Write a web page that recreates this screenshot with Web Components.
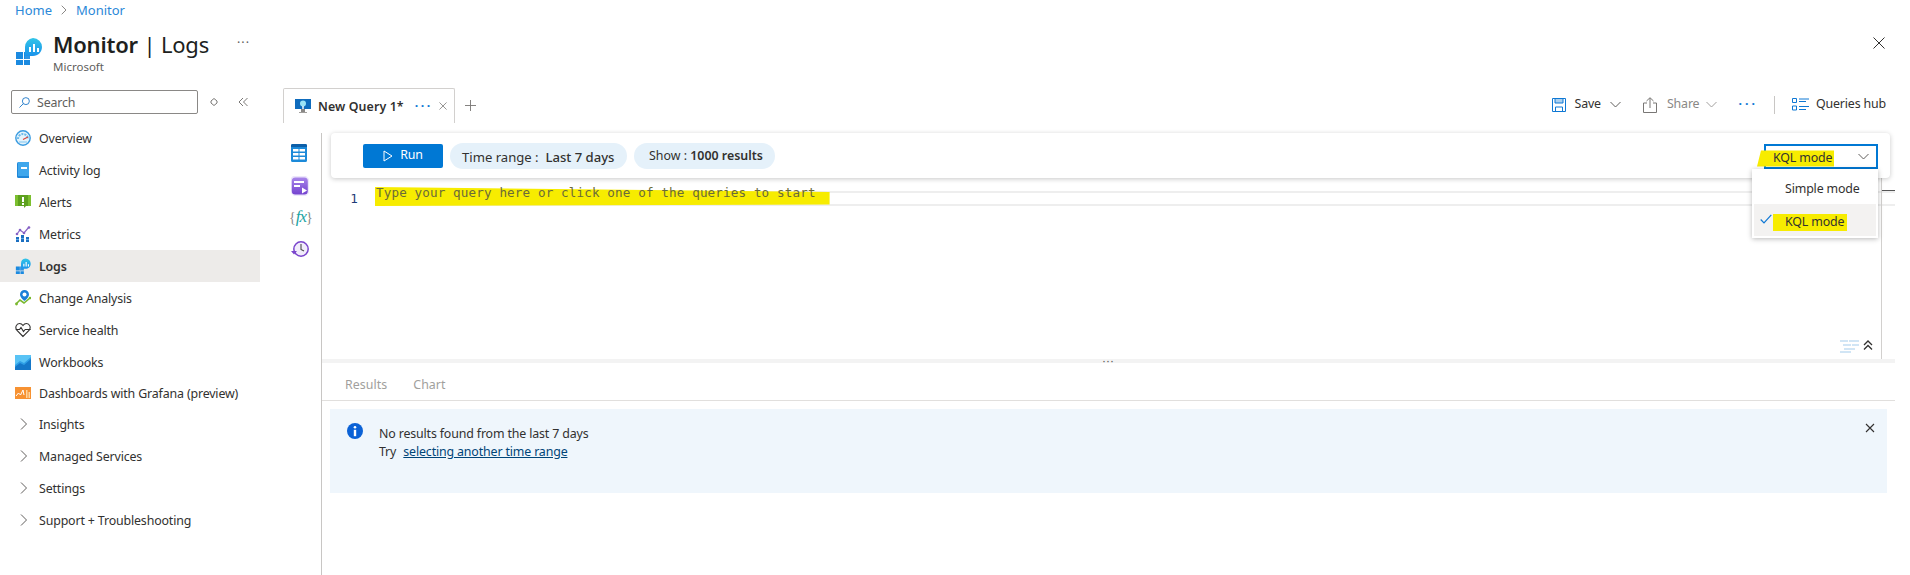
<!DOCTYPE html>
<html lang="en">
<head>
<meta charset="utf-8">
<title>Monitor | Logs</title>
<style>
  html, body { margin: 0; height: 100%; background: #fff; overflow: hidden; }
  body { font: 12.4px/1.3 "Noto Sans", "Liberation Sans", sans-serif; letter-spacing: -.15px; color: #323130; }
</style>
</head>
<body>
<monitor-app></monitor-app>

<script>
const icons = {
  monitor: `<svg viewBox="0 0 27 28"><defs><linearGradient id="g" x1="0" y1="0" x2="0" y2="1"><stop offset="0" stop-color="#32c5e8"/><stop offset="1" stop-color="#1b93eb"/></linearGradient></defs>
    <path fill="#1b8ae0" d="M1 15h7v7H1zM9 15h1v7H9zM1 23h7v5H1zM9 23h6v5H9z"/><path fill="#1b8ae0" d="M9 15h6v7H9z" opacity=".9"/>
    <path fill="url(#g)" d="M18 1a9 9 0 0 1 9 9c0 5-4 9-9 9h-8v-9a9 9 0 0 1 8-9z"/>
    <path fill="#fff" d="M14 10h2v5h-2zM18 7h2v8h-2zM22 11h2v4h-2z"/></svg>`,
  overview: `<svg viewBox="0 0 16 16"><circle cx="8" cy="8" r="7.2" fill="#e4f3fb" stroke="#3a9be0" stroke-width="1.4"/><path d="M3 9a5 5 0 0 1 10 0" fill="none" stroke="#6bb9ea" stroke-width="2" stroke-dasharray="2 1"/><path d="M8 9.5l5-2.5" stroke="#d9403a" stroke-width="1.2"/><path d="M4 12h8" stroke="#9dd2f2" stroke-width="1.4"/></svg>`,
  activity: `<svg viewBox="0 0 16 16"><path fill="#1f87d8" d="M2 1.5A1.5 1.5 0 0 1 3.5 0H14v16H3.5A1.5 1.5 0 0 1 2 14.5z"/><path fill="#3fa7ec" d="M3 0h11v14H3z"/><path fill="#fff" d="M6 5h6v2H6z"/></svg>`,
  alerts: `<svg viewBox="0 0 16 16"><path fill="#5ea11f" d="M0 1h16v11H11l-2 2v-2H0z"/><path fill="#7cbf2f" d="M0 1h3v11H0zM13 1h3v11h-3z"/><path fill="#fff" d="M7 3h2v5H7zM7 9h2v2H7z"/></svg>`,
  metrics: `<svg viewBox="0 0 16 16"><path fill="#1b6fc0" d="M1 11h3v5H1zM6 9h3v7H6zM11 11h3v5h-3z"/><path fill="#5ea8e8" d="M1 13h3v1H1zM6 12h3v1H6zM11 13h3v1h-3z"/><path fill="none" stroke="#8661c5" stroke-width="1.2" d="M2 8l3-4 4 3 5-6"/><g fill="#8661c5"><circle cx="2" cy="8" r="1.3"/><circle cx="5" cy="4" r="1.3"/><circle cx="9" cy="7" r="1.3"/><circle cx="14" cy="1.5" r="1.3"/></g></svg>`,
  change: `<svg viewBox="0 0 16 16"><path fill="none" stroke="#7ab82f" stroke-width="1.6" d="M1 14l4-4 4 3 6-5"/><circle cx="1.5" cy="14" r="1.4" fill="#7ab82f"/><circle cx="15" cy="8" r="1.3" fill="#7ab82f"/><path fill="#1b7fd8" d="M9.5 0a4.5 4.5 0 0 1 4.5 4.5c0 3-4.500 6.500-4.500 6.500S5 7.500 5 4.500A4.500 4.500 0 0 1 9.500 0z"/><circle cx="9.500" cy="4.500" r="2" fill="#fff"/></svg>`,
  health: `<svg viewBox="0 0 16 16"><path fill="none" stroke="#323130" stroke-width="1.1" d="M8 14.500L2 8.500C-.5 5.500 1.500 1.500 4.500 1.500c1.500 0 2.700.8 3.500 2 .8-1.200 2-2 3.500-2 3 0 5 4 2.500 7z"/><path fill="none" stroke="#323130" stroke-width="1.1" d="M.8 7.500h3.700l1.500-2 2.500 4 1.700-2h5.500"/></svg>`,
  workbooks: `<svg viewBox="0 0 16 16"><path fill="#2f9fe6" d="M0 1h16v15H0z"/><path fill="#59c3f5" d="M0 1h16v2L9 9 5 7l-5 4z"/><path fill="#1577c8" d="M0 16v-3l5-4 4 2 7-6v11z"/></svg>`,
  grafana: `<svg viewBox="0 0 16 12"><path fill="#f79232" d="M0 0h16v12H0z"/><path fill="#fcd5a0" d="M11 3h1.500v8H11zM13.500 5H15v6h-1.500z"/><path fill="none" stroke="#fff" stroke-width="1" d="M1 9l2.500-3 2 2L8 3l1 5"/></svg>`,
  tab: `<svg viewBox="0 0 16 16"><path fill="#0f6cbd" d="M0 1h16v10H0z"/><path fill="#8a8886" d="M6 11h4v3H6z"/><path fill="#a19f9d" d="M4 14h8v1H4z"/><circle cx="8" cy="5.500" r="3" fill="#9be3f5"/><path fill="#fff" d="M7 8h2v3H7z" opacity=".7"/></svg>`,
  table: `<svg viewBox="0 0 16 18"><path fill="#1c8ad9" d="M1.500 0h13A1.500 1.500 0 0 1 16 1.500v15a1.500 1.500 0 0 1-1.500 1.500h-13A1.500 1.500 0 0 1 0 16.500v-15A1.500 1.500 0 0 1 1.500 0z"/><path fill="#0d5fa8" d="M1.500 0h13A1.500 1.500 0 0 1 16 1.500V3H0V1.500A1.500 1.500 0 0 1 1.500 0z"/><path fill="#fff" d="M2 5h5.500v2.500H2zM8.500 5H14v2.500H8.500zM2 9h5.500v2.500H2zM8.500 9H14v2.500H8.500zM2 13h5.500v2.500H2zM8.500 13H14v2.500H8.500z"/></svg>`,
  query: `<svg viewBox="0 0 18 20"><defs><linearGradient id="q" x1="0" y1="0" x2="0" y2="1"><stop offset="0" stop-color="#a885ea"/><stop offset="1" stop-color="#7443cf"/></linearGradient></defs><path fill="#ece6fb" d="M2 0h13l3 3v14l-3 3H3l-3-3V2z"/><rect x=".8" y="1.500" width="16" height="17" rx="3.500" fill="url(#q)"/><path fill="#fff" d="M3 5h10v2H3zM3 9h6v2H3z"/><path fill="#fff" d="M11 11.500l5 3-5 3z"/></svg>`,
  history: `<svg viewBox="0 0 18 18"><circle cx="10" cy="9" r="7.200" fill="#f1ecfb" stroke="#7a45cc" stroke-width="1.500"/><path d="M10 4v5.500l3 1.500" fill="none" stroke="#4a4a4a" stroke-width="1.100"/><path fill="#7a45cc" d="M0 11h6l-3 3.500z"/></svg>`,
  save: `<svg viewBox="0 0 14 14"><path fill="#fff" stroke="#0f78d4" d="M.5.500h13v13H.5z"/><path fill="#0f78d4" d="M3 .500h8V5H3z" opacity=".35"/><path fill="none" stroke="#0f78d4" d="M3 .500V5h8V.500M3.500 13.500V9h7v4.500"/></svg>`,
  share: `<svg viewBox="0 0 14 16"><path fill="none" stroke="#797775" d="M4 6H.500v9.500h13V6H10"/><path fill="none" stroke="#797775" d="M7 11V1M3.500 4L7 .700 10.500 4"/></svg>`,
  hub: `<svg viewBox="0 0 17 13"><path fill="none" stroke="#0f78d4" d="M.500.500h4v4h-4zM.500 8h4v4h-4z"/><path stroke="#0f78d4" d="M7 1h10M7 3.500h7M7 8.500h10M7 11.500h7"/></svg>`,
  wrap: `<svg viewBox="0 0 20 13"><path stroke="#c2ddf2" stroke-width="1.500" d="M0 1h8M9 1h10M3 5h8M12 5h7M4 9h11M0 12h11"/></svg>`,
  collapse: `<svg viewBox="0 0 10 10"><path fill="none" stroke="#323130" stroke-width="1.300" d="M1 5l4-4 4 4M1 9.500l4-4 4 4"/></svg>`,
  search: `<svg viewBox="0 0 12 12"><circle cx="7.500" cy="4.500" r="3.800" fill="none" stroke="#1f78c8"/><path stroke="#1f78c8" d="M4.800 7.200L.5 11.500"/></svg>`,
  sort: `<svg viewBox="0 0 8 12"><path fill="none" stroke="#797775" d="M4 2.500l3 2.500v2L4 9.500 1 7V5z"/></svg>`,
  collapseLeft: `<svg viewBox="0 0 10 10"><path fill="none" stroke="#797775" d="M5 1L1 5l4 4M9.500 1l-4 4 4 4"/></svg>`,
  chevron: `<svg viewBox="0 0 11 7"><path fill="none" stroke="#605e5c" d="M.5 1l5 5 5-5"/></svg>`,
  chevronGrey: `<svg viewBox="0 0 11 7"><path fill="none" stroke="#a19f9d" d="M.5 1l5 5 5-5"/></svg>`,
  right: `<svg viewBox="0 0 7 12"><path fill="none" stroke="#605e5c" d="M1 .500L6.500 6 1 11.500"/></svg>`,
  crumb: `<svg viewBox="0 0 6 10"><path fill="none" stroke="#8a8886" d="M.700.700L5 5 .700 9.300"/></svg>`,
  close: `<svg viewBox="0 0 12 12"><path stroke="#323130" d="M.5.500l11 11M11.500.500l-11 11"/></svg>`,
  closeSmall: `<svg viewBox="0 0 10 10"><path stroke="#323130" stroke-width="1.100" d="M1 1l8 8M9 1L1 9"/></svg>`,
  closeTab: `<svg viewBox="0 0 9 9"><path stroke="#8a8886" d="M.5.500l8 8M8.500.500l-8 8"/></svg>`,
  plus: `<svg viewBox="0 0 12 12"><path stroke="#797775" d="M6 0v12M0 6h12"/></svg>`,
  play: `<svg viewBox="0 0 10 12"><path fill="none" stroke="#fff" d="M1 1l8 5-8 5z"/></svg>`,
  check: `<svg viewBox="0 0 12 10"><path fill="none" stroke="#0f78d4" stroke-width="1.200" d="M.7 5.500l3.300 3.300L11.300.8"/></svg>`,
  info: `<svg viewBox="0 0 16 16"><circle cx="8" cy="8" r="8" fill="#0b62d6"/><circle cx="8" cy="4.300" r="1.300" fill="#fff"/><path fill="#fff" d="M6.800 6.800h2.400v6.400H6.800z"/></svg>`
};

class AzIcon extends HTMLElement {
  connectedCallback() {
    const w = this.getAttribute("w") || 16;
    const h = this.getAttribute("h") || w;
    this.attachShadow({ mode: "open" }).innerHTML = `
      <style>
        :host { display: inline-flex; flex: none; width: ${w}px; height: ${h}px; }
        svg { width: 100%; height: 100%; display: block; }
      </style>${icons[this.getAttribute("name")]}`;
  }
}
customElements.define("az-icon", AzIcon);

const navTemplate = document.createElement("template");
navTemplate.innerHTML = `
  <style>
    :host { display: flex; align-items: center; height: 32px; color: #323130; }
    :host([active]) { background: #edebe9; font-weight: 600; }
    :host([compact]) { height: 30px; }
    .icon { width: 16px; margin: 0 8px 0 15px; display: flex; justify-content: center; }
    .label { padding-top: 2px; }
  </style>
  <span class="icon"><slot name="icon"></slot></span>
  <span class="label"><slot></slot></span>`;
class NavItem extends HTMLElement {
  constructor() {
    super();
    this.attachShadow({ mode: "open" }).appendChild(navTemplate.content.cloneNode(true));
  }
}
customElements.define("nav-item", NavItem);

class SideNav extends HTMLElement {
  constructor() {
    super();
    this.attachShadow({ mode: "open" }).innerHTML = `
      <style>
        :host { display: block; width: 260px; flex: none; padding-top: 8px; }
        .search-row { display: flex; align-items: center; height: 24px; margin-bottom: 8px; }
        .search { box-sizing: border-box; width: 187px; height: 24px; margin-left: 11px; border: 1px solid #8a8886; border-radius: 2px;
          display: flex; align-items: center; gap: 7px; padding-left: 7px; color: #605e5c; }
        .search span { padding-top: 2px; }
        .sort { margin-left: 12px; }
        .fold { margin-left: 20px; }
      </style>
      <div class="search-row">
        <div class="search"><az-icon name="search" w="11"></az-icon><span>Search</span></div>
        <az-icon class="sort" name="sort" w="8" h="12"></az-icon>
        <az-icon class="fold" name="collapseLeft" w="10"></az-icon>
      </div>
      <slot></slot>`;
  }
}
customElements.define("side-nav", SideNav);

class BladeHeader extends HTMLElement {
  constructor() {
    super();
    this.attachShadow({ mode: "open" }).innerHTML = `
      <style>
        :host { display: block; height: 82px; box-sizing: border-box; }
        .crumbs { display: flex; align-items: center; height: 18px; padding: 2px 0 0 15px; box-sizing: border-box; gap: 9px; color: #2b88d8; font-size: 13px; letter-spacing: 0; }
        .head { display: flex; align-items: flex-start; padding: 11px 25px 0 15px; }
        .logo { margin: 8px 11px 0 0; }
        h1 { margin: 0; font-size: 22px; line-height: 30px; font-weight: 400; letter-spacing: -.2px; color: #201f1e; white-space: nowrap; }
        b { font-weight: 600; }
        .sub { font-size: 11.500px; line-height: 16px; margin-top: 0; color: #605e5c; letter-spacing: 0; }
        .more { margin: 3px 0 0 28px; color: #605e5c; letter-spacing: 1px; line-height: 22px; }
        .close { margin: 8px 0 0 auto; }
      </style>
      <div class="crumbs"><span>Home</span><az-icon name="crumb" w="6" h="10"></az-icon><span>Monitor</span></div>
      <div class="head">
        <az-icon class="logo" name="monitor" w="27" h="28"></az-icon>
        <div><h1><b>Monitor</b> | Logs</h1><div class="sub">Microsoft</div></div>
        <span class="more">···</span>
        <az-icon class="close" name="close" w="12"></az-icon>
      </div>`;
  }
}
customElements.define("blade-header", BladeHeader);

class TabStrip extends HTMLElement {
  constructor() {
    super();
    this.attachShadow({ mode: "open" }).innerHTML = `
      <style>
        :host { display: flex; align-items: stretch; height: 35px; margin-top: 6px; padding-left: 23px; }
        .tab { box-sizing: border-box; width: 172px; border: 1px solid #d2d0ce; border-bottom: 0; border-radius: 2px 2px 0 0;
          display: flex; align-items: center; padding-left: 11px; font-weight: 600; color: #323130; letter-spacing: 0; }
        .title { margin-left: 7px; padding-top: 2px; letter-spacing: .1px; }
        .dots { margin-left: 11px; color: #0f78d4; font-weight: 700; letter-spacing: 2.500px; }
        .x { margin-left: 6px; }
        .plus { align-self: center; margin-left: 10px; }
        .right { margin-left: auto; display: flex; align-items: center; padding: 0 24px 2px 0; }
        .muted { color: #8a8886; }
        .sep { width: 1px; height: 18px; background: #c8c6c4; margin: 0 17px 0 16px; }
        .hdots { color: #0f78d4; font-weight: 700; letter-spacing: 3px; margin-left: 21px; }
      </style>
      <div class="tab"><az-icon name="tab"></az-icon><span class="title">New Query 1*</span><span class="dots">···</span><az-icon class="x" name="closeTab" w="8"></az-icon></div>
      <az-icon class="plus" name="plus" w="11"></az-icon>
      <div class="right">
        <az-icon name="save" w="14"></az-icon><span style="margin:0 9px">Save</span><az-icon name="chevron" w="11" h="7"></az-icon>
        <az-icon name="share" w="14" h="16" style="margin-left:22px"></az-icon><span class="muted" style="margin:0 7px 0 10px">Share</span><az-icon name="chevronGrey" w="11" h="7"></az-icon>
        <span class="hdots">···</span>
        <span class="sep"></span>
        <az-icon name="hub" w="17" h="13"></az-icon><span style="margin-left:7px">Queries hub</span>
      </div>`;
  }
}
customElements.define("tab-strip", TabStrip);

class ModeSelect extends HTMLElement {
  constructor() {
    super();
    this.attachShadow({ mode: "open" }).innerHTML = `
      <style>
        :host { display: block; position: relative; width: 114px; height: 25px; margin: 1px 0 0 auto; color: #323130; }
        .box { box-sizing: border-box; height: 100%; border: 2px solid #0078d4; display: flex; align-items: center; padding: 0 7px; justify-content: space-between; isolation: isolate; }
        .label { position: relative; padding-top: 5px; }
        .label::before { content: ""; position: absolute; z-index: -1; left: -16px; right: -2px; top: 5px; bottom: 0; background: #f7ec00; clip-path: polygon(4px 0, 100% 0, 100% 100%, 0 100%); }
        .menu { position: absolute; z-index: 5; top: 25px; right: 0; width: 126px; height: 69px; box-sizing: border-box; padding: 1px 2px 2px; background: #fff;
          box-shadow: 0 1px 5px rgba(0,0,0,.28); }
        .opt { height: 34px; padding: 6px 0 0 31px; box-sizing: border-box; display: flex; align-items: center; position: relative; isolation: isolate; }
        .on { height: 32px; background: #f3f2f1; }
        .on az-icon { position: absolute; left: 6px; top: 10px; }
        .hl { position: relative; }
        .hl::before { content: ""; position: absolute; z-index: -1; left: -12px; right: -3px; top: 0; bottom: 0; background: #f7ec00; }
      </style>
      <div class="box"><span class="label">KQL mode</span><az-icon name="chevron" w="11" h="7"></az-icon></div>
      <div class="menu">
        <div class="opt">Simple mode</div>
        <div class="opt on"><az-icon name="check" w="12" h="10"></az-icon><span class="hl">KQL mode</span></div>
      </div>`;
  }
}
customElements.define("mode-select", ModeSelect);

class QueryToolbar extends HTMLElement {
  constructor() {
    super();
    this.attachShadow({ mode: "open" }).innerHTML = `
      <style>
        :host { display: flex; align-items: center; box-sizing: border-box; height: 45px; margin: 0 5px 0 9px; padding: 0 12px 0 32px;
          border-radius: 4px; background: #fff; box-shadow: 0 1px 5px rgba(0,0,0,.22); position: relative; z-index: 2; }
        .run { box-sizing: border-box; width: 80px; height: 24px; border-radius: 2px; background: #0078d4; color: #fff;
          display: flex; align-items: center; justify-content: center; gap: 7px; }
        .pill { box-sizing: border-box; height: 26px; border-radius: 13px; background: #e5f1fa; display: flex; align-items: center; margin-left: 7px; white-space: pre; letter-spacing: 0; }
        .time { width: 177px; padding: 4px 0 0 12px; font-size: 13.100px; }
        .show { width: 141px; padding: 1px 0 0 15px; }
        b { font-weight: 600; }
      </style>
      <div class="run"><az-icon name="play" w="10" h="12"></az-icon>Run</div>
      <div class="pill time">Time range :  <b style="font-weight:500">Last 7 days</b></div>
      <div class="pill show">Show : <b>1000 results</b></div>
      <mode-select></mode-select>`;
  }
}
customElements.define("query-toolbar", QueryToolbar);

class QueryEditor extends HTMLElement {
  constructor() {
    super();
    this.attachShadow({ mode: "open" }).innerHTML = `
      <style>
        :host { display: flex; flex: 1; min-height: 0; font: 12.600px/14px "DejaVu Sans Mono", "Liberation Mono", monospace; letter-spacing: .13px; }
        .gutter { width: 54px; flex: none; box-sizing: border-box; padding: 14px 18px 0 0; text-align: right; color: #1d3b78; }
        .code { flex: 1; display: flex; flex-direction: column; position: relative; padding-top: 13px; }
        .line { box-sizing: border-box; height: 15px; border: solid #eeeeee; border-width: 2px 0; display: flex; align-items: flex-start; }
        .text { position: relative; margin-top: -7px; color: #6a6a3a; white-space: pre; isolation: isolate; }
        .text::before { content: ""; position: absolute; z-index: -1; left: -1px; right: -14px; top: 1px; bottom: -6px; background: #f7ec00; clip-path: polygon(0 0, 100% 26%, 100% 92%, 0 100%); }
        .rule { position: absolute; right: 13px; top: 0; bottom: 0; width: 1px; background: #d2d0ce; }
        .tick { position: absolute; right: 0; top: 12px; width: 13px; height: 1px; background: #555; }
        .tools { position: absolute; right: 22px; bottom: 6px; display: flex; align-items: flex-start; gap: 3px; }
      </style>
      <div class="gutter">1</div>
      <div class="code">
        <div class="line"><span class="text">Type your query here or click one of the queries to start</span></div>
        <span class="rule"></span><span class="tick"></span>
        <div class="tools"><az-icon name="wrap" w="20" h="13"></az-icon><az-icon name="collapse" w="10"></az-icon></div>
      </div>`;
  }
}
customElements.define("query-editor", QueryEditor);

class InfoBanner extends HTMLElement {
  constructor() {
    super();
    this.attachShadow({ mode: "open" }).innerHTML = `
      <style>
        :host { display: flex; box-sizing: border-box; height: 84px; margin: 8px 8px 0; padding: 14px 12px 0 17px; background: #eff6fc; color: #323130; line-height: 18px; }
        .msg { margin-left: 16px; flex: 1; margin-top: 2px; }
      </style>
      <az-icon name="info"></az-icon>
      <div class="msg"><slot></slot></div>
      <az-icon name="closeSmall" w="10"></az-icon>`;
  }
}
customElements.define("info-banner", InfoBanner);

class ResultsPane extends HTMLElement {
  constructor() {
    super();
    this.attachShadow({ mode: "open" }).innerHTML = `
      <style>
        :host { display: block; flex: none; }
        .split { height: 4px; background: #f3f3f3; display: flex; justify-content: center; align-items: center; color: #605e5c; font-size: 11px; line-height: 4px; letter-spacing: 1px; }
        .tabs { height: 38px; box-sizing: border-box; border-bottom: 1px solid #e1dfdd; display: flex; align-items: center; gap: 26px; padding: 7px 0 0 23px; color: #a19f9d; letter-spacing: .05px; }
        a { color: #004578; text-decoration: underline; margin-left: 4px; }
      </style>
      <div class="split">···</div>
      <div class="tabs"><span>Results</span><span>Chart</span></div>
      <info-banner>No results found from the last 7 days<br>Try <a>selecting another time range</a></info-banner>`;
  }
}
customElements.define("results-pane", ResultsPane);

class QueryRail extends HTMLElement {
  constructor() {
    super();
    this.attachShadow({ mode: "open" }).innerHTML = `
      <style>
        :host { display: flex; flex-direction: column; align-items: flex-start; box-sizing: border-box; width: 62px; flex: none; padding: 11px 0 0 31px; border-right: 1px solid #c8c6c4; }
        .i { height: 32px; display: flex; }
        .fx { font: italic 17px/18px "Liberation Serif", serif; color: #1aa3a3; white-space: nowrap; margin-left: -2px; letter-spacing: -1px; }
        .fx span { color: #8a8886; font-style: normal; font-size: 14px; letter-spacing: 0; }
      </style>
      <div class="i"><az-icon name="table" w="16" h="18"></az-icon></div>
      <div class="i"><az-icon name="query" w="18" h="20"></az-icon></div>
      <div class="i"><span class="fx"><span>{</span>fx<span>}</span></span></div>
      <div class="i"><az-icon name="history" w="18"></az-icon></div>`;
  }
}
customElements.define("query-rail", QueryRail);

class MonitorApp extends HTMLElement {
  constructor() {
    super();
    this.attachShadow({ mode: "open" }).innerHTML = `
      <style>
        :host { display: flex; flex-direction: column; height: 575px; overflow: hidden; }
        .body { display: flex; flex: 1; min-height: 0; }
        main { flex: 1; min-width: 0; display: flex; flex-direction: column; }
        .work { flex: 1; display: flex; min-height: 0; margin-top: 10px; }
        .pane { flex: 1; min-width: 0; display: flex; flex-direction: column; margin-right: 15px; }
        .upper { height: 226px; display: flex; flex-direction: column; flex: none; }
      </style>
      <blade-header></blade-header>
      <div class="body">
        <side-nav>
          <nav-item><az-icon slot="icon" name="overview"></az-icon>Overview</nav-item>
          <nav-item><az-icon slot="icon" name="activity"></az-icon>Activity log</nav-item>
          <nav-item><az-icon slot="icon" name="alerts"></az-icon>Alerts</nav-item>
          <nav-item><az-icon slot="icon" name="metrics"></az-icon>Metrics</nav-item>
          <nav-item active><az-icon slot="icon" name="monitor" w="16" h="16"></az-icon>Logs</nav-item>
          <nav-item><az-icon slot="icon" name="change"></az-icon>Change Analysis</nav-item>
          <nav-item><az-icon slot="icon" name="health"></az-icon>Service health</nav-item>
          <nav-item><az-icon slot="icon" name="workbooks"></az-icon>Workbooks</nav-item>
          <nav-item compact><az-icon slot="icon" name="grafana" w="16" h="12"></az-icon>Dashboards with Grafana (preview)</nav-item>
          <nav-item><az-icon slot="icon" name="right" w="7" h="12"></az-icon>Insights</nav-item>
          <nav-item><az-icon slot="icon" name="right" w="7" h="12"></az-icon>Managed Services</nav-item>
          <nav-item><az-icon slot="icon" name="right" w="7" h="12"></az-icon>Settings</nav-item>
          <nav-item><az-icon slot="icon" name="right" w="7" h="12"></az-icon>Support + Troubleshooting</nav-item>
        </side-nav>
        <main>
          <tab-strip></tab-strip>
          <div class="work">
            <query-rail></query-rail>
            <div class="pane">
              <div class="upper">
                <query-toolbar></query-toolbar>
                <query-editor></query-editor>
              </div>
              <results-pane></results-pane>
            </div>
          </div>
        </main>
      </div>`;
  }
}
customElements.define("monitor-app", MonitorApp);
</script>
</body>
</html>
